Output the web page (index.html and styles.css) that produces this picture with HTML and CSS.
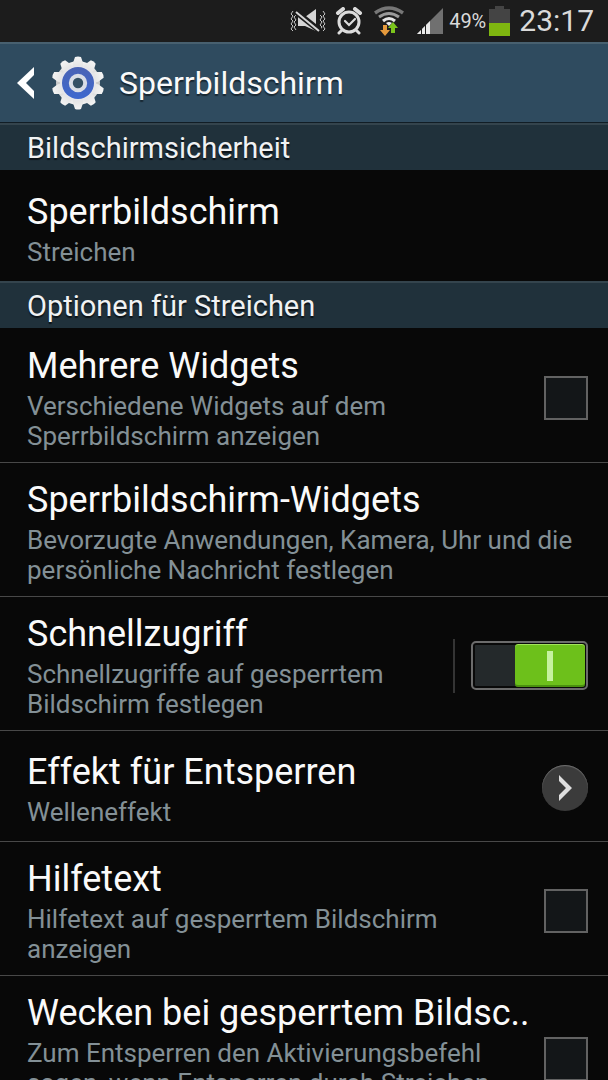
FILE: index.html
```html
<!DOCTYPE html>
<html lang="de">
<head>
<meta charset="utf-8">
<meta name="viewport" content="width=device-width, initial-scale=1">
<title>Sperrbildschirm</title>
<link rel="stylesheet" href="styles.css">
</head>
<body>
<div class="screen">
  <div class="status">
    <svg class="status-vibrate" width="36" height="28" viewBox="0 0 36 28" fill="none">
      <path d="M3 4l-2 3 2 2-2 3 2 2-2 3 2 2-2 3 2 2M6 8l-2 2 2 3-2 2 2 3-2 2 2 3M33 4l2 3-2 2 2 3-2 2 2 3-2 2 2 3-2 2M30 8l2 2-2 3 2 2-2 3 2 2-2 3" stroke="#c4c4c4"/>
      <path d="M8 10h7l11-8v22l-11-5H8z" fill="#d6d6d6"/>
      <path d="M5 4l25 20" stroke="#1c1c1c" stroke-width="6"/>
      <path d="M6 5l23 19" stroke="#d6d6d6" stroke-width="2"/>
    </svg>
    <svg class="status-alarm" width="28" height="28" viewBox="0 0 28 28" fill="none" stroke="#dcdcdc" stroke-linecap="round">
      <circle cx="14" cy="15" r="10" stroke-width="3"/>
      <path d="M10 14l4 4 6-6" stroke-width="2.2"/>
      <path d="M3 6l5-4M25 6l-5-4" stroke-width="4"/>
      <path d="M6 24l-2 2M22 24l2 2" stroke-width="3"/>
    </svg>
    <svg class="status-wifi" width="30" height="30" viewBox="0 0 30 30" fill="none">
      <path d="M1 7Q15-3 29 7" stroke="#777" stroke-width="3.4"/>
      <path d="M5 11Q15 4 25 11" stroke="#999" stroke-width="3"/>
      <path d="M9 15Q15 10 21 15" stroke="#e4e4e4" stroke-width="3"/>
      <path d="M12 17q3-2 6 0l-3 3z" fill="#eee"/>
      <path d="M9 19h4v5h3l-5 6-5-6h3z" fill="#e69a3c"/>
      <path d="M17 27h4v-5h3l-5-6-5 6h3z" fill="#7cc51c"/>
    </svg>
    <svg class="status-signal" width="28" height="28" viewBox="0 0 28 28">
      <path d="M1 27L27 1v26z" fill="#707070"/>
      <path d="M1 27l13-13v13z" fill="#e8e8e8"/>
      <path d="M5.500 20v7M9.500 16v11" stroke="#1c1c1c"/>
    </svg>
    <span class="percent">49%</span>
    <svg class="status-battery" width="21" height="30" viewBox="0 0 21 30">
      <path d="M6 0h9v3h6v15H0V3h6z" fill="#444"/>
      <path d="M0 17h21v13H0z" fill="#7eb610"/>
    </svg>
    <time class="clock">23:17</time>
  </div>

  <header class="bar">
    <button class="back" aria-label="Zurück">
      <svg width="20" height="34" viewBox="0 0 20 34"><path d="M18 1v8l-8 8 8 8v8L1 17z" fill="#fff"/></svg>
    </button>
    <svg class="gear" width="54" height="54" viewBox="0 0 54 54">
      <defs>
        <linearGradient id="metal" x1="0" y1="0" x2="0" y2="1"><stop offset="0" stop-color="#f5f5f5"/><stop offset=".5" stop-color="#c9c9c9"/><stop offset="1" stop-color="#f4f4f4"/></linearGradient>
        <linearGradient id="blue" x1="0" y1="0" x2="0" y2="1"><stop offset="0" stop-color="#4a63b4"/><stop offset="1" stop-color="#3e68cf"/></linearGradient>
      </defs>
      <g fill="url(#metal)">
        <circle cx="27" cy="27" r="22"/>
        <path id="tooth" d="M22 7l2-6q3-1 6 0l2 6v40l-2 6q-3 1-6 0l-2-6z"/>
        <use href="#tooth" transform="rotate(36 27 27)"/>
        <use href="#tooth" transform="rotate(72 27 27)"/>
        <use href="#tooth" transform="rotate(108 27 27)"/>
        <use href="#tooth" transform="rotate(144 27 27)"/>
      </g>
      <circle cx="27" cy="27" r="18" fill="#e6e6ea"/>
      <circle cx="27" cy="27" r="16" fill="url(#blue)"/>
      <circle cx="27" cy="27" r="7.200" fill="#345064" stroke="#d9dde6" stroke-width="4"/>
    </svg>
    <h1 class="bar-title">Sperrbildschirm</h1>
  </header>

  <main class="list">
    <h2 class="section">Bildschirmsicherheit</h2>
    <div class="row">
      <div class="text"><h3 class="title">Sperrbildschirm</h3><p class="sub">Streichen</p></div>
    </div>
    <h2 class="section">Optionen für Streichen</h2>
    <div class="row">
      <label class="text" for="widgets"><span class="title">Mehrere Widgets</span><span class="sub">Verschiedene Widgets auf dem<br>Sperrbildschirm anzeigen</span></label>
      <input class="check" type="checkbox" id="widgets">
    </div>
    <div class="row">
      <div class="text"><h3 class="title">Sperrbildschirm-Widgets</h3><p class="sub">Bevorzugte Anwendungen, Kamera, Uhr und die<br>persönliche Nachricht festlegen</p></div>
    </div>
    <div class="row">
      <label class="text" for="quick"><span class="title">Schnellzugriff</span><span class="sub">Schnellzugriffe auf gesperrtem<br>Bildschirm festlegen</span></label>
      <div class="switch-area"><input class="switch" type="checkbox" role="switch" id="quick" checked></div>
    </div>
    <div class="row">
      <div class="text"><h3 class="title">Effekt für Entsperren</h3><p class="sub">Welleneffekt</p></div>
      <button class="more" aria-label="Effekt für Entsperren">
        <svg width="16" height="26" viewBox="0 0 16 26"><path d="M2 0l13 13L2 26v-6l7-7-7-7z" fill="#dedede"/></svg>
      </button>
    </div>
    <div class="row">
      <label class="text" for="help"><span class="title">Hilfetext</span><span class="sub">Hilfetext auf gesperrtem Bildschirm<br>anzeigen</span></label>
      <input class="check" type="checkbox" id="help">
    </div>
    <div class="row row-tall">
      <label class="text" for="wake"><span class="title">Wecken bei gesperrtem Bildsc..</span><span class="sub">Zum Entsperren den Aktivierungsbefehl<br>sagen, wenn Entsperren durch Streichen</span></label>
      <input class="check" type="checkbox" id="wake">
    </div>
  </main>
</div>
</body>
</html>
```
FILE: styles.css
```css
* { box-sizing: border-box; margin: 0; }

body {
  background: #080808;
  color: #fafafa;
  font-family: Roboto, "Noto Sans", sans-serif;
}

button { border: 0; padding: 0; background: none; }

.screen {
  display: flex;
  flex-direction: column;
  height: 100vh;
  overflow: hidden;
}

.status {
  display: flex;
  flex: none;
  align-items: center;
  justify-content: flex-end;
  height: 42px;
  padding-right: 14px;
  background: #1c1c1c;
  color: #dadada;
}

.status-vibrate { margin-right: 9px; }
.status-alarm { margin-right: 11px; }
.status-wifi { margin-right: 12px; }
.status-signal { margin-right: 5px; }
.percent { font-size: 20px; margin-right: 3px; line-height: 44px; }
.status-battery { margin-right: 9px; }
.clock { font-size: 30px; line-height: 40px; }

.bar {
  display: flex;
  flex: none;
  align-items: center;
  height: 81px;
  padding-left: 16px;
  background: #2f4b5f;
  border-top: 2px solid #48606f;
  border-bottom: 1px solid #111d25;
}

.back { display: flex; margin-right: 15px; }
.gear { margin-right: 14px; }

.bar-title {
  font-size: 32px;
  font-weight: 400;
  text-shadow: 0 2px 1px #182833;
}

.section {
  height: 47px;
  padding-left: 27px;
  background: #20313b;
  border-top: 2px solid #34444d;
  color: #f0f2f3;
  font-size: 29px;
  font-weight: 400;
  line-height: 47px;
  text-shadow: 0 2px 1px #0c1318;
}

.row {
  display: flex;
  align-items: center;
  min-height: 111px;
  padding: 15px 20px 11px 27px;
  border-top: 1px solid #484848;
}

.section + .row { border-top-color: #080808; }
.row-tall { min-height: 162px; }
.row-tall .text { align-self: flex-start; }

.text { flex: 1; min-width: 0; }

.title {
  display: block;
  margin-bottom: 3px;
  font-size: 36px;
  font-weight: 400;
  line-height: 44px;
  white-space: nowrap;
}

.sub {
  display: block;
  color: #839096;
  font-size: 26px;
  line-height: 30px;
  white-space: nowrap;
}

.check {
  appearance: none;
  flex: none;
  width: 44px;
  height: 44px;
  margin: 0;
  background: #131618;
  border: 2px solid #626262;
}

.switch-area {
  display: flex;
  align-items: center;
  height: 54px;
  padding-left: 16px;
  border-left: 2px solid #343434;
}

.switch {
  appearance: none;
  display: flex;
  justify-content: flex-end;
  width: 117px;
  height: 49px;
  margin: 0;
  padding: 1px;
  background: #24292b;
  border: 2px solid #6c6c6c;
  border-radius: 5px;
  box-shadow: inset 0 0 0 2px #090909;
}

.switch::before {
  content: "";
  width: 70px;
  height: 43px;
  border-radius: 3px;
  background: linear-gradient(#c6f2a0, #c6f2a0) center / 6px 30px no-repeat, #6dc01b;
  box-shadow: inset 0 1px #a4e35c, inset 0 -2px #4b9110;
}

.more {
  display: flex;
  align-items: center;
  justify-content: center;
  width: 46px;
  height: 46px;
  border-radius: 50%;
  background: #3b3b3b;
  box-shadow: inset 0 1px 1px #707070;
}
```
